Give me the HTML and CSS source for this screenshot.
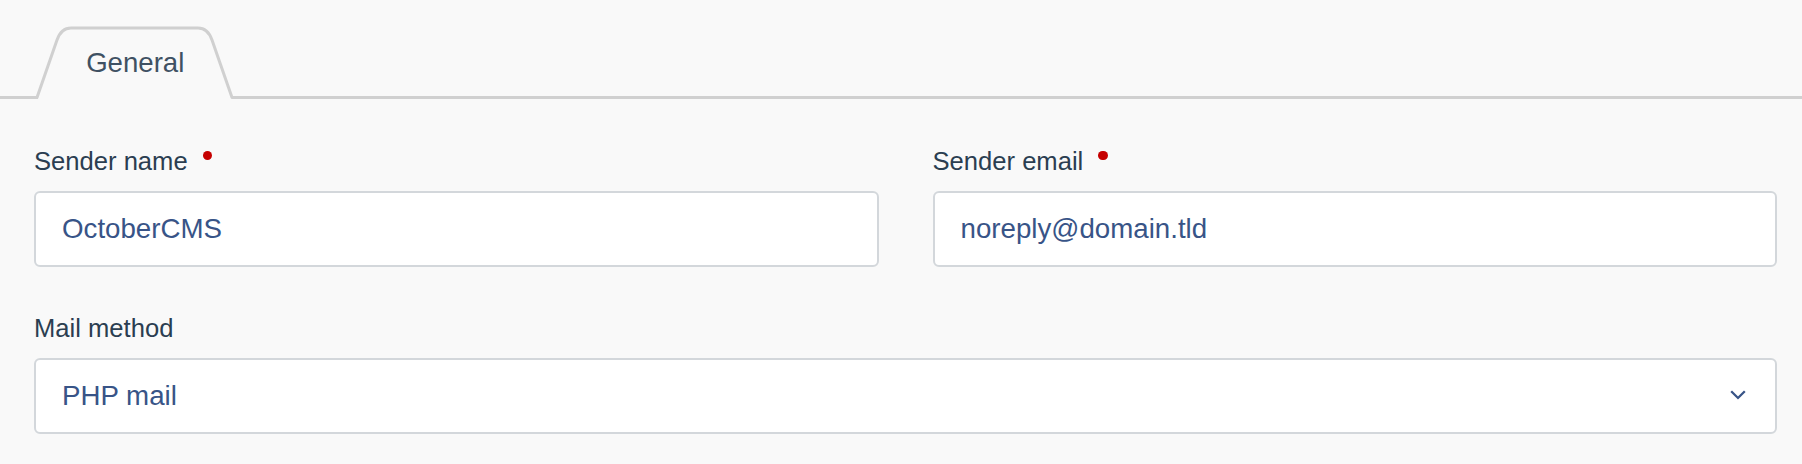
FILE: index.html
```
<!DOCTYPE html>
<html lang="en">
<head>
<meta charset="utf-8">
<title>Mail configuration</title>
<link rel="stylesheet" href="styles.css">
</head>
<body>
<div class="tabs">
  <div class="tab">
    <svg class="tab-shape" width="210" height="73" viewBox="0 0 210 73" aria-hidden="true">
      <rect x="8" y="60" width="194" height="13" fill="#f9f9f9"/>
      <path d="M -3 71.5 H 7 L 27 14 Q 31.2 2 41 2 H 168 Q 177.8 2 182 14 L 202 71.5 H 213" fill="#f9f9f9" stroke="#d0d0d0" stroke-width="3" stroke-linejoin="round"/>
    </svg>
    <span class="tab-label">General</span>
  </div>
</div>
<form class="form">
  <div class="row two">
    <div class="field">
      <label class="label required" for="sender_name">Sender name</label>
      <input class="control" id="sender_name" type="text" value="OctoberCMS">
    </div>
    <div class="field">
      <label class="label required" for="sender_email">Sender email</label>
      <input class="control" id="sender_email" type="text" value="noreply@domain.tld">
    </div>
  </div>
  <div class="row">
    <div class="field">
      <span class="label">Mail method</span>
      <div class="control select">
        <span>PHP mail</span>
        <svg class="chevron" width="16" height="10" viewBox="0 0 16 10" aria-hidden="true">
          <polyline points="1.2,1.3 8,8 14.8,1.3" fill="none" stroke="#385487" stroke-width="2.3"/>
        </svg>
      </div>
    </div>
  </div>
</form>
</body>
</html>
```
FILE: styles.css
```
html, body {
  margin: 0;
  padding: 0;
}
body {
  background: #f9f9f9;
  font-family: "Liberation Sans", Arial, sans-serif;
  width: 1802px;
  height: 464px;
  overflow: hidden;
}
.tabs {
  box-sizing: border-box;
  height: 99px;
  border-bottom: 3px solid #d0d0d0;
  display: flex;
  align-items: flex-end;
}
.tab {
  position: relative;
  box-sizing: border-box;
  width: 210px;
  height: 73px;
  margin-left: 30px;
  margin-bottom: -3px;
  padding-top: 21.4px;
  display: flex;
  justify-content: center;
  align-items: flex-start;
}
.tab-shape {
  position: absolute;
  left: 0;
  top: 0;
  display: block;
}
.tab-label {
  position: relative;
  font-size: 27.6px;
  line-height: 32px;
  color: #3f5163;
  padding-left: 0.5px;
}
.form {
  padding: 47px 25px 0 34px;
  margin: 0;
}
.row {
  display: grid;
  grid-template-columns: 1fr;
}
.row.two {
  grid-template-columns: 1fr 1fr;
  column-gap: 54px;
}
.row + .row {
  margin-top: 46.5px;
}
.field {
  display: flex;
  flex-direction: column;
  min-width: 0;
}
.label {
  display: block;
  font-size: 25.6px;
  line-height: 30px;
  color: #2b3e51;
  margin-bottom: 14.5px;
}
.label.required::after {
  content: "";
  display: inline-block;
  width: 9.5px;
  height: 9.5px;
  border-radius: 50%;
  background: #c60000;
  margin-left: 15px;
  vertical-align: 10px;
}
.control {
  box-sizing: border-box;
  height: 76px;
  width: 100%;
  margin: 0;
  border: 2px solid #d3d7db;
  border-radius: 6px;
  background: #ffffff;
  padding: 0 25px 0 26px;
  font-family: "Liberation Sans", Arial, sans-serif;
  font-size: 27.7px;
  color: #385487;
  outline: none;
}
.select {
  display: flex;
  align-items: center;
  justify-content: space-between;
  padding-right: 29px;
}
.chevron {
  display: block;
  margin-top: -2px;
}
```
